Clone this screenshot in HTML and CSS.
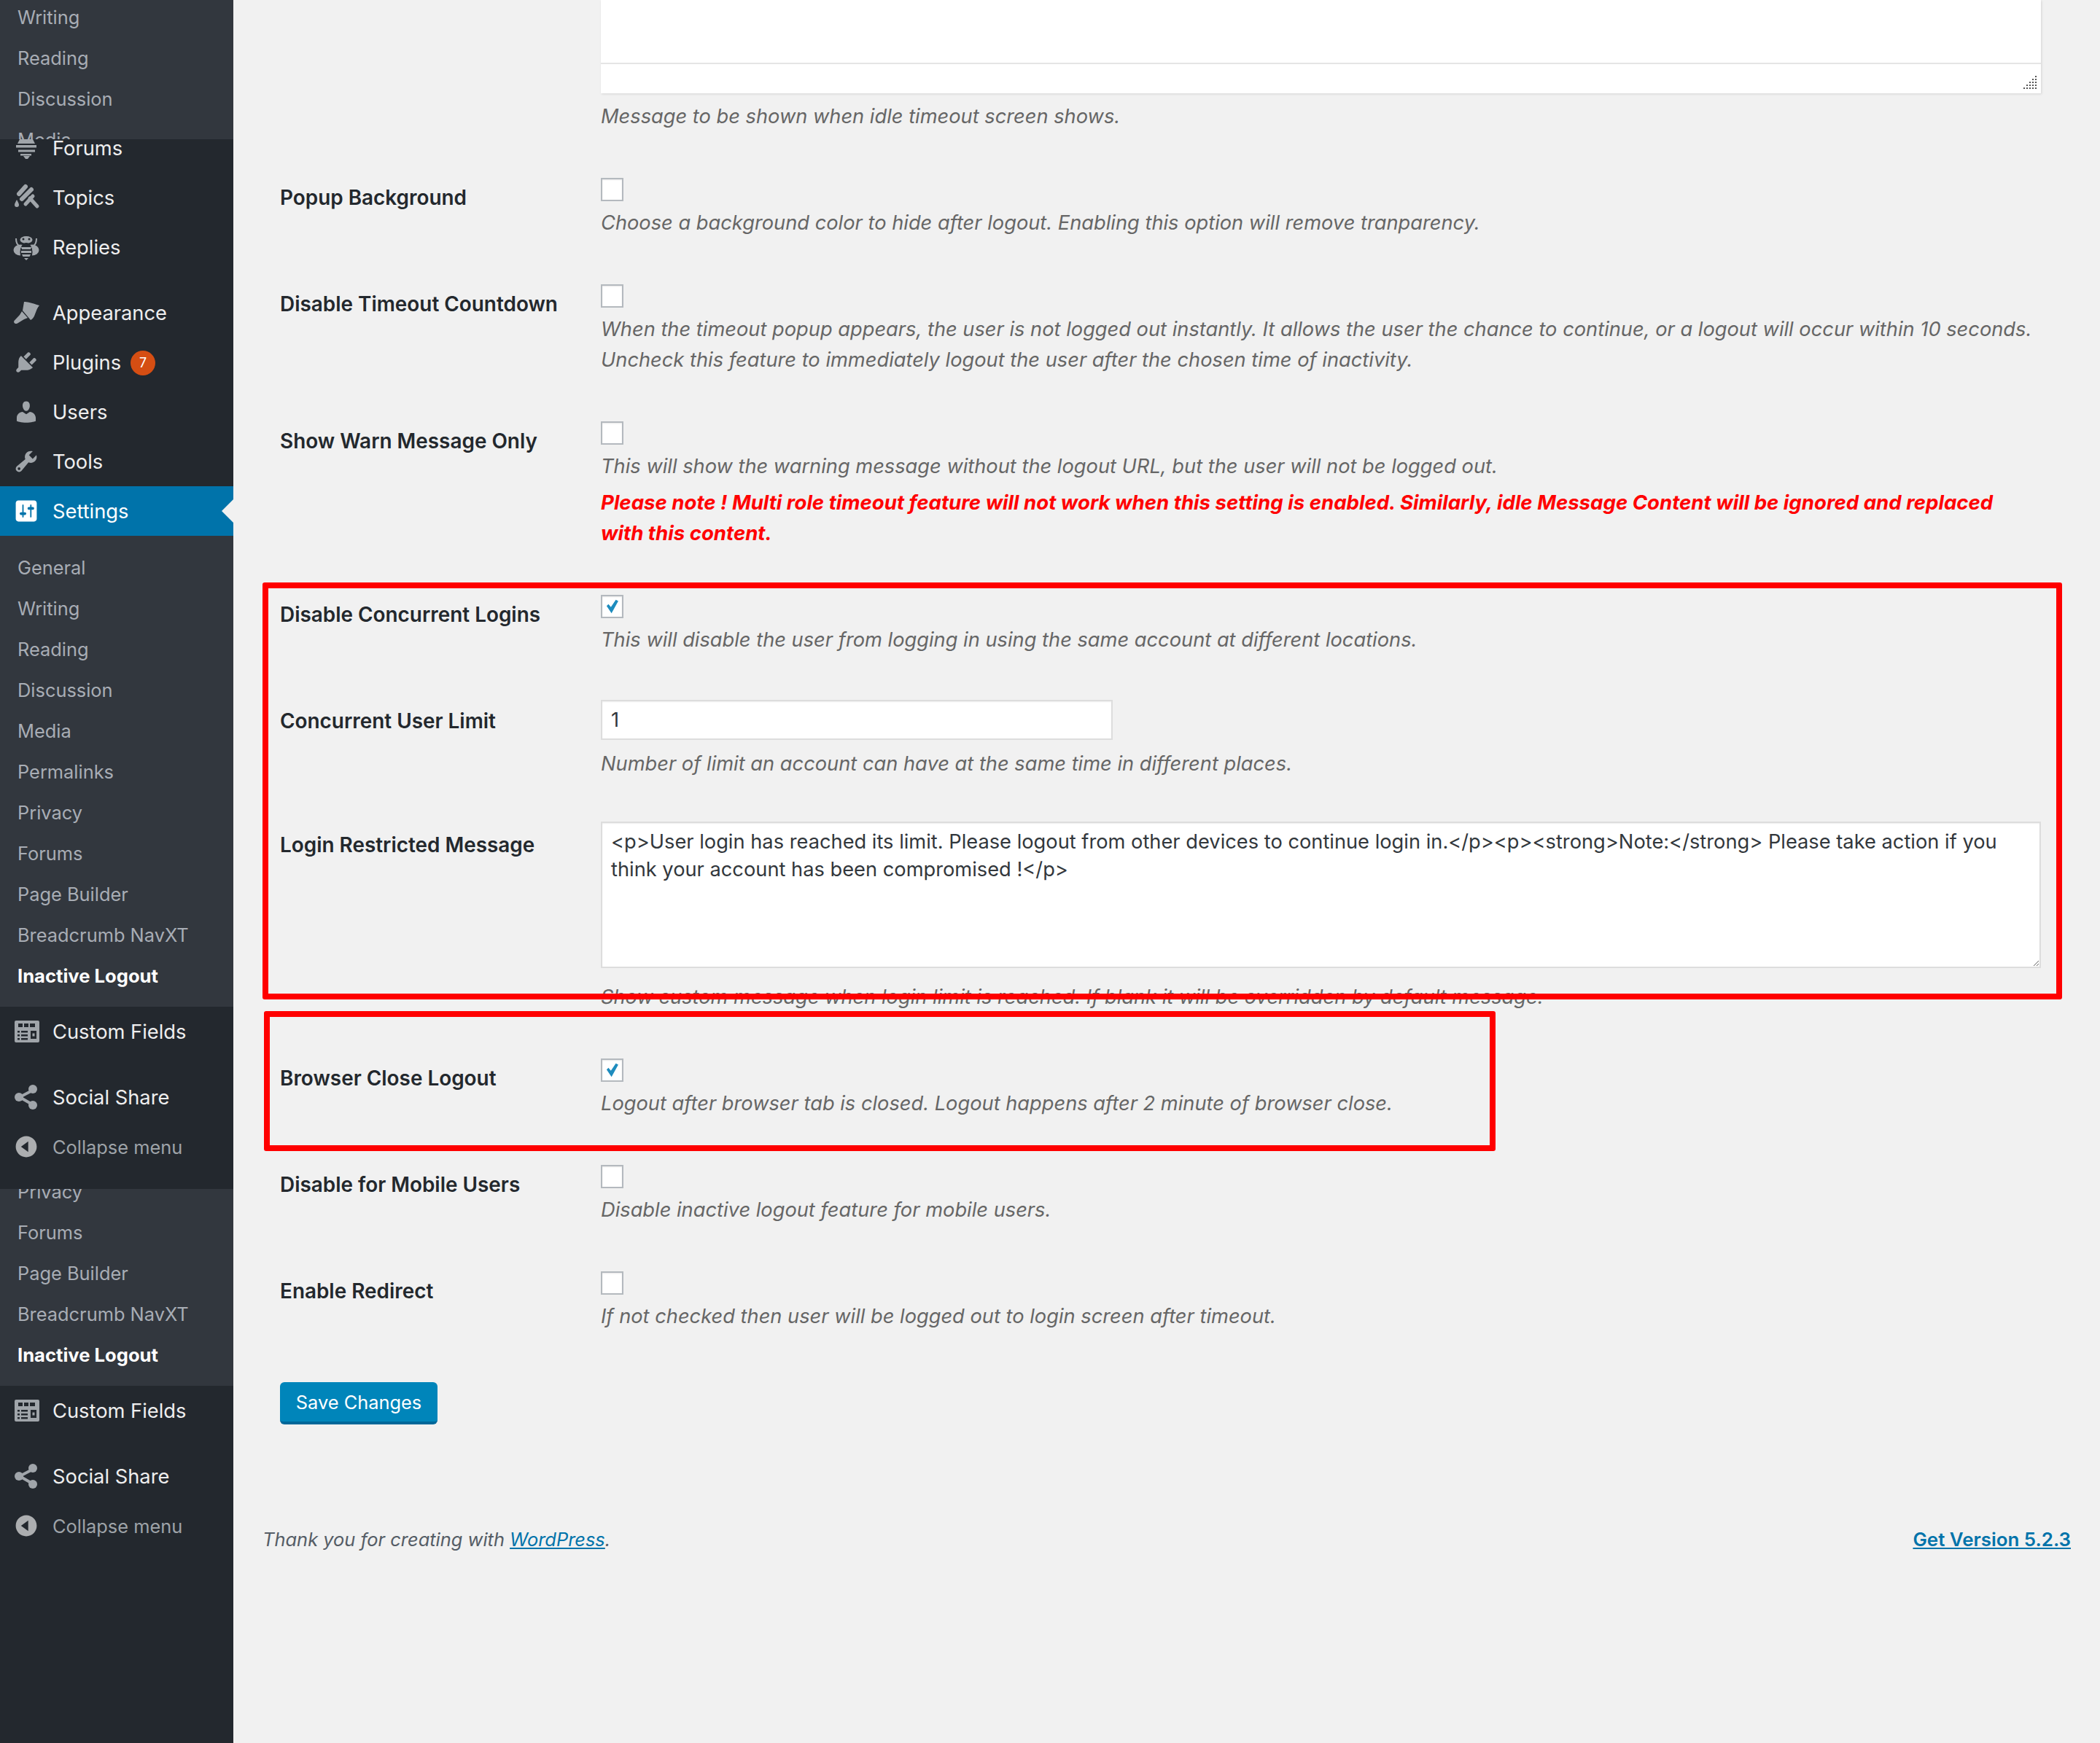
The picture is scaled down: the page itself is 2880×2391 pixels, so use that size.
FILE: index.html
```html
<!DOCTYPE html>
<html lang="en">
<head>
<meta charset="utf-8">
<title>Inactive Logout Settings</title>
<link rel="stylesheet" href="styles.css">
</head>
<body>
<div class="page">
  <nav class="sidebar">
    <ul class="sub sub--cut-top">
      <li>Writing</li><li>Reading</li><li>Discussion</li><li>Media</li>
    </ul>
    <a class="item item--cut">
      <svg class="ico" viewBox="0 0 36 40"><path d="M9 8h18l3 6H6zM4 16h28v3.500H4zM7 22.500h23v3H7zM10 28h15v2.500H10zM14 31h9l-3 4h-3z"/></svg>Forums
    </a>
    <a class="item">
      <svg class="ico" viewBox="0 0 36 40"><path d="M8 15 17 5" class="st6"/><path d="M12 22 25 9" class="st6"/><path d="M23 21 33 32" class="st5"/><path d="M17 29 27 18" class="st5"/><path d="M5 23c1.500 3 3 5 3 7a3 3 0 0 1-6 0c0-2 1.500-4 3-7z"/></svg>Topics
    </a>
    <a class="item item--gap">
      <svg class="ico" viewBox="0 0 36 40"><path class="st2" d="M4 8c0 4 1 8 4 10M32 8c0 4-1 8-4 10"/><ellipse cx="10" cy="24" rx="9.500" ry="7.500"/><ellipse cx="26" cy="24" rx="9.500" ry="7.500"/><ellipse cx="18" cy="10" rx="8.500" ry="5"/><circle class="cut" cx="14" cy="9" r="1.500"/><circle class="cut" cx="22" cy="9" r="1.500"/><ellipse class="cut" cx="18" cy="27" rx="8.500" ry="13"/><path d="M11 20h14l-1 3H12zM11 25h14v3H11zM12 30h12l-1.500 3h-9zM15 35h6l-3 3z"/></svg>Replies
    </a>
    <a class="item">
      <svg class="ico" viewBox="0 0 36 40"><path d="M15 5C19 5 24 6 36 10C33 13 32 17 30 22C29 26 26 29 24 30L13 17zM12 18L20 27L15 29L6 34.500C3 36 0 34 1.500 31L9 23z"/></svg>Appearance
    </a>
    <a class="item">
      <svg class="ico" viewBox="0 0 20 20" preserveAspectRatio="xMidYMid meet"><path d="M13.110 4.360L9.870 7.600 8 5.730l3.240-3.240c.35-.34 1.050-.2 1.560.32.520.51.660 1.210.310 1.550zm-8 1.770l.910-1.120 9.010 9.010-1.190.84c-.71.710-2.630 1.160-3.820 1.160H6.140L4.900 17.260c-.59.590-1.540.590-2.120 0-.59-.58-.59-1.530 0-2.120l1.240-1.240v-3.880c0-1.130.4-3.190 1.090-3.890zm7.260 3.970l3.240-3.240c.34-.35 1.040-.21 1.550.31.520.51.660 1.210.310 1.550l-3.240 3.250z"/></svg>Plugins<span class="badge">7</span>
    </a>
    <a class="item">
      <svg class="ico" viewBox="0 0 20 20"><path d="M10 9.250c-2.270 0-2.730-3.440-2.730-3.440C7 4.020 7.820 2 9.970 2c2.160 0 2.980 2.020 2.710 3.810 0 0-.41 3.440-2.680 3.440zm0 2.570L12.720 10c2.390 0 4.520 2.330 4.520 4.530v2.490s-3.650 1.130-7.240 1.130c-3.650 0-7.240-1.130-7.240-1.130v-2.490c0-2.250 1.940-4.480 4.470-4.480z"/></svg>Users
    </a>
    <a class="item">
      <svg class="ico" viewBox="0 0 20 20"><path d="M16.680 9.770c-1.340 1.340-3.300 1.670-4.950.99l-5.410 6.520c-.99.990-2.590.99-3.580 0s-.99-2.590 0-3.570l6.520-5.420c-.68-1.650-.35-3.610.99-4.950 1.280-1.280 3.120-1.620 4.720-1.060l-2.890 2.890 2.820 2.820 2.860-2.870c.53 1.580.18 3.390-1.080 4.670zM3.810 16.210c.4.390 1.040.39 1.430 0 .4-.4.4-1.040 0-1.430-.39-.4-1.030-.4-1.430 0-.39.390-.39 1.030 0 1.430z"/></svg>Tools
    </a>
    <a class="item item--current">
      <svg class="ico" viewBox="0 0 20 20"><path d="M18 16V4c0-1.100-.9-2-2-2H4c-1.100 0-2 .9-2 2v12c0 1.100.9 2 2 2h12c1.100 0 2-.9 2-2zM8 11h1c.55 0 1 .45 1 1s-.45 1-1 1H8v1.500c0 .28-.22.5-.5.5s-.5-.22-.5-.5V13H6c-.55 0-1-.45-1-1s.45-1 1-1h1V5.500c0-.28.22-.5.5-.5s.5.22.5.5V11zm5-2h-1c-.55 0-1-.45-1-1s.45-1 1-1h1V5.500c0-.28.22-.5.5-.5s.5.22.5.5V7h1c.55 0 1 .45 1 1s-.45 1-1 1h-1v5.500c0 .28-.22.5-.5.5s-.5-.22-.5-.5V9z"/></svg>Settings
    </a>
    <ul class="sub">
      <li>General</li><li>Writing</li><li>Reading</li><li>Discussion</li><li>Media</li><li>Permalinks</li><li>Privacy</li><li>Forums</li><li>Page Builder</li><li>Breadcrumb NavXT</li><li class="on">Inactive Logout</li>
    </ul>
    <a class="item item--gap">
      <svg class="ico" viewBox="0 0 36 40"><path fill-rule="evenodd" d="M4 5h30a2 2 0 0 1 2 2v26a2 2 0 0 1-2 2H4a2 2 0 0 1-2-2V7a2 2 0 0 1 2-2zm3 4v5h6V9zm8 0v5h6V9zm8 0v5h7V9zM6 19v2.500h3V19zm5 0v2.500h9V19zm13 0v11h8V19zm2.500 3.500h3v4h-3zM6 24v2.500h3V24zm5 0v2.500h9V24zM6 29v2.500h3V29zm5 0v2.500h9V29z"/></svg>Custom Fields
    </a>
    <a class="item">
      <svg class="ico" viewBox="0 0 36 40"><path class="st3" d="M28 10 9 20l19 11" /><circle cx="8" cy="20" r="6"/><circle cx="27" cy="9" r="6"/><circle cx="27" cy="31" r="6"/></svg>Social Share
    </a>
    <a class="item item--collapse">
      <svg class="ico" viewBox="0 0 20 20"><path d="M18 10c0-4.420-3.580-8-8-8s-8 3.580-8 8 3.580 8 8 8 8-3.580 8-8zm-6.500-4v8L6 10z"/></svg>Collapse menu
    </a>
    <ul class="sub sub--second">
      <li>Privacy</li><li>Forums</li><li>Page Builder</li><li>Breadcrumb NavXT</li><li class="on">Inactive Logout</li>
    </ul>
    <a class="item item--gap">
      <svg class="ico" viewBox="0 0 36 40"><path fill-rule="evenodd" d="M4 5h30a2 2 0 0 1 2 2v26a2 2 0 0 1-2 2H4a2 2 0 0 1-2-2V7a2 2 0 0 1 2-2zm3 4v5h6V9zm8 0v5h6V9zm8 0v5h7V9zM6 19v2.500h3V19zm5 0v2.500h9V19zm13 0v11h8V19zm2.500 3.500h3v4h-3zM6 24v2.500h3V24zm5 0v2.500h9V24zM6 29v2.500h3V29zm5 0v2.500h9V29z"/></svg>Custom Fields
    </a>
    <a class="item">
      <svg class="ico" viewBox="0 0 36 40"><path class="st3" d="M28 10 9 20l19 11" /><circle cx="8" cy="20" r="6"/><circle cx="27" cy="9" r="6"/><circle cx="27" cy="31" r="6"/></svg>Social Share
    </a>
    <a class="item item--collapse">
      <svg class="ico" viewBox="0 0 20 20"><path d="M18 10c0-4.420-3.580-8-8-8s-8 3.580-8 8 3.580 8 8 8 8-3.580 8-8zm-6.500-4v8L6 10z"/></svg>Collapse menu
    </a>
  </nav>

  <main class="main">
    <div class="form">
      <div class="intro">
        <div class="editor">
          <div class="editor-body"></div>
          <div class="editor-status">
            <svg class="grip" viewBox="0 0 20 20"><path d="M17 1h2v2h-2zM13 5h2v2h-2zM17 5h2v2h-2zM13 9h2v2h-2zM17 9h2v2h-2zM9 9h2v2H9zM5 13h2v2H5zM9 13h2v2H9zM13 13h2v2h-2zM17 13h2v2h-2zM1 17h2v2H1zM5 17h2v2H5zM9 17h2v2H9zM13 17h2v2h-2zM17 17h2v2h-2z"/></svg>
          </div>
        </div>
        <p class="hint hint--intro">Message to be shown when idle timeout screen shows.</p>
      </div>

      <div class="row">
        <div class="label">Popup Background</div>
        <div class="field"><span class="check"></span><p class="hint">Choose a background color to hide after logout. Enabling this option will remove tranparency.</p></div>
      </div>
      <div class="row">
        <div class="label">Disable Timeout Countdown</div>
        <div class="field"><span class="check"></span><p class="hint">When the timeout popup appears, the user is not logged out instantly. It allows the user the chance to continue, or a logout will occur within 10 seconds.<br>Uncheck this feature to immediately logout the user after the chosen time of inactivity.</p></div>
      </div>
      <div class="row">
        <div class="label">Show Warn Message Only</div>
        <div class="field"><span class="check"></span><p class="hint">This will show the warning message without the logout URL, but the user will not be logged out.</p><p class="warn">Please note ! Multi role timeout feature will not work when this setting is enabled. Similarly, idle Message Content will be ignored and replaced<br>with this content.</p></div>
      </div>
      <div class="row">
        <div class="label">Disable Concurrent Logins</div>
        <div class="field"><span class="check check--on"><svg viewBox="0 0 32 32"><path d="M7 15l3-3 4 5 8-12 4 2-11 20z"/></svg></span><p class="hint">This will disable the user from logging in using the same account at different locations.</p></div>
      </div>
      <div class="row">
        <div class="label">Concurrent User Limit</div>
        <div class="field field--input"><input class="input" type="text" value="1"><p class="hint">Number of limit an account can have at the same time in different places.</p></div>
      </div>
      <div class="row">
        <div class="label">Login Restricted Message</div>
        <div class="field field--area"><textarea class="area" rows="5">&lt;p&gt;User login has reached its limit. Please logout from other devices to continue login in.&lt;/p&gt;&lt;p&gt;&lt;strong&gt;Note:&lt;/strong&gt; Please take action if you think your account has been compromised !&lt;/p&gt;</textarea><p class="hint">Show custom message when login limit is reached. If blank it will be overridden by default message.</p></div>
      </div>
      <div class="row">
        <div class="label">Browser Close Logout</div>
        <div class="field"><span class="check check--on"><svg viewBox="0 0 32 32"><path d="M7 15l3-3 4 5 8-12 4 2-11 20z"/></svg></span><p class="hint">Logout after browser tab is closed. Logout happens after 2 minute of browser close.</p></div>
      </div>
      <div class="row">
        <div class="label">Disable for Mobile Users</div>
        <div class="field"><span class="check"></span><p class="hint">Disable inactive logout feature for mobile users.</p></div>
      </div>
      <div class="row">
        <div class="label">Enable Redirect</div>
        <div class="field"><span class="check"></span><p class="hint">If not checked then user will be logged out to login screen after timeout.</p></div>
      </div>
      <button class="save" type="button">Save Changes</button>
    </div>
    <footer class="footer">
      <span class="thanks">Thank you for creating with <a class="link">WordPress</a>.</span>
      <a class="version">Get Version 5.2.3</a>
    </footer>
    <div class="mark mark--one"></div>
    <div class="mark mark--two"></div>
  </main>
</div>
</body>
</html>
```

FILE: styles.css
```css
* { box-sizing: border-box; }
html, body { margin: 0; padding: 0; }
body {
  width: 2880px;
  height: 2391px;
  overflow: hidden;
  background: #f1f1f1;
  font-family: Inter, "Liberation Sans", sans-serif;
  color: #444;
}
.page { display: flex; height: 2391px; }

/* sidebar */
.sidebar { width: 320px; flex: none; background: #23282e; overflow: hidden; }
.sub { list-style: none; margin: 0; padding: 15px 0; background: #32373e; }
.sub li {
  height: 56px;
  line-height: 57px;
  padding-left: 24px;
  font-size: 25.400px;
  color: #a8adb5;
}
.sub li.on { color: #fff; font-weight: 700; font-size: 25.600px; }
.sub--cut-top { height: 191px; overflow: hidden; padding: 0; }
.sub--cut-top li:first-child { margin-top: -5px; }
.sub--second { height: 270px; overflow: hidden; padding: 0 0 15px; display: flex; flex-direction: column; justify-content: flex-end; flex-shrink: 0; }
.sub--second li { flex: none; }
.item {
  display: flex;
  align-items: center;
  height: 68px;
  padding: 2px 0 0 18px;
  font-size: 27.300px;
  line-height: 36px;
  color: #eee;
}
.item--cut { height: 46px; padding-bottom: 22px; }
.item--gap { margin-bottom: 22px; }
.item--current { background: #0073aa; color: #fff; position: relative; }
.item--current::after {
  content: "";
  position: absolute;
  right: 0;
  top: 18px;
  border: 16px solid transparent;
  border-right-color: #f1f1f1;
  border-left-width: 0;
}
.item--collapse { height: 67px; font-size: 25.400px; color: #9ea3a8; margin-bottom: 25px; }
.ico { width: 36px; height: 40px; margin: 0 18px 2px 0; flex: none; fill: #a0a5aa; overflow: visible; }
.item--current .ico { fill: #fff; }
.item--collapse .ico { fill: #acaeb0; }
.ico .cut { fill: #23282e; }
.st6 { fill: none; stroke: #a0a5aa; stroke-width: 6; stroke-linecap: round; }
.st5 { fill: none; stroke: #a0a5aa; stroke-width: 5; stroke-linecap: round; }
.st3 { fill: none; stroke: #a0a5aa; stroke-width: 4; }
.st2 { fill: none; stroke: #a0a5aa; stroke-width: 2; }
.badge {
  width: 34px;
  height: 34px;
  margin-left: 13px;
  border-radius: 50%;
  background: #d54e13;
  color: #fff;
  font-size: 18px;
  line-height: 34px;
  text-align: center;
}

/* main */
.main { flex: 1; position: relative; }
.form { padding: 0 81px 0 64px; }
.intro { margin-left: 440px; padding-bottom: 31px; }
.editor {
  background: #fff;
  height: 128px;
  box-shadow: 1px 1px 3px rgba(0, 0, 0, .12);
  display: flex;
  flex-direction: column;
}
.editor-body { height: 88px; border-bottom: 2px solid #e5e5e5; flex: none; }
.editor-status { flex: 1; position: relative; }
.grip { position: absolute; right: 5px; bottom: 5px; width: 20px; height: 20px; fill: #555; }
.hint { margin: 0; font-size: 27.250px; line-height: 42px; font-style: italic; color: #666; }
.hint--intro { margin-top: 11px; }
.row { display: grid; grid-template-columns: 440px 1fr; padding: 32px 0 31px; }
.label { padding-top: 7px; font-size: 27.900px; line-height: 40px; font-weight: 600; color: #23282d; }
.check {
  display: block;
  width: 31px;
  height: 32px;
  margin-bottom: 9px;
  background: #fff;
  border: 2px solid #b4b9be;
  box-shadow: inset 0 1px 2px rgba(0, 0, 0, .1);
}
.check svg { display: block; width: 27px; height: 28px; fill: #1e8cbe; }
.warn { margin: 7px 0 1px; font-size: 27.600px; line-height: 42px; font-style: italic; font-weight: 700; color: #f00; }
.input {
  display: block;
  width: 702px;
  height: 55px;
  margin: -2px 0 12px;
  padding: 0 12px;
  border: 2px solid #ddd;
  background: #fff;
  box-shadow: inset 0 1px 2px rgba(0, 0, 0, .07);
  font: 27.250px Inter, sans-serif;
  color: #32373c;
  outline: 0;
}
.area {
  display: block;
  width: 100%;
  height: 201px;
  margin: -5px 0 19px;
  padding: 7px 12px;
  border: 2px solid #ddd;
  background: #fff;
  box-shadow: inset 0 1px 2px rgba(0, 0, 0, .07);
  font: 27.250px/38px Inter, sans-serif;
  color: #32373c;
  outline: 0;
}
.save {
  display: block;
  width: 216px;
  height: 58px;
  margin-top: 38px;
  border: 0;
  border-bottom: 4px solid #006799;
  border-radius: 6px;
  background: #0085ba;
  color: #fff;
  font: 25.400px Inter, sans-serif;
  padding: 0;
}
.footer {
  display: flex;
  justify-content: space-between;
  margin: 137px 40px 0;
  font-size: 25.450px;
  line-height: 42px;
}
.thanks { font-style: italic; color: #555d66; }
.link { color: #0073aa; text-decoration: underline; }
.version { color: #0073aa; text-decoration: underline; font-weight: 600; font-size: 25.900px; }
.mark { position: absolute; border: 8px solid #f00; border-radius: 3px; pointer-events: none; }
.mark--one { left: 40px; top: 799px; width: 2468px; height: 572px; }
.mark--two { left: 42px; top: 1387px; width: 1689px; height: 192px; }
```
